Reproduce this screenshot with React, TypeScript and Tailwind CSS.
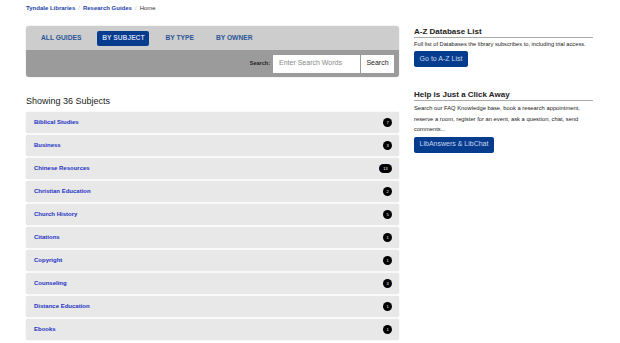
import React from "react";

const subjects: [string, string][] = [
  ["Biblical Studies", "7"],
  ["Business", "3"],
  ["Chinese Resources", "13"],
  ["Christian Education", "2"],
  ["Church History", "5"],
  ["Citations", "1"],
  ["Copyright", "1"],
  ["Counseling", "3"],
  ["Distance Education", "1"],
  ["Ebooks", "1"],
];

export default function App() {
  return (
    <div className="w-[620px] h-[343px] overflow-hidden bg-white text-[#222] font-['Liberation_Sans',Arial,sans-serif]">
      <div className="flex items-center gap-[3px] pl-[26px] pt-[2px] h-[14px] text-[6px] font-bold">
        <span className="text-[#1c3fa8]">Tyndale Libraries</span>
        <span className="text-[#bbb] font-normal">/</span>
        <span className="text-[#1c3fa8]">Research Guides</span>
        <span className="text-[#bbb] font-normal">/</span>
        <span className="text-[#333] font-normal">Home</span>
      </div>
      <div className="flex pl-[26px] pt-[12px] gap-[15px]">
        <div className="w-[373px] flex flex-col">
          <div className="rounded-[3px] overflow-hidden shadow-[0_0_1px_rgba(0,0,0,0.4)]">
            <div className="bg-[#cdcdcd] h-[24px] flex items-center pl-[8px] text-[6.7px] font-bold text-[#2b5597] whitespace-nowrap">
              <div className="px-[7px] h-[15px] flex items-center">ALL GUIDES</div>
              <div className="w-[52px] h-[15px] justify-center flex items-center bg-[#063c8e] text-[#c9d5ee] rounded-[2px] ml-[9px]">BY SUBJECT</div>
              <div className="px-[7px] h-[15px] flex items-center ml-[9px]">BY TYPE</div>
              <div className="px-[7px] h-[15px] flex items-center ml-[8px]">BY OWNER</div>
            </div>
            <div className="bg-[#9b9b9b] h-[27px] flex items-center justify-end pr-[5px]">
              <span className="text-[5.5px] font-bold text-[#222] mr-[3px]">Search:</span>
              <div className="w-[87px] h-[18px] bg-white flex items-center pl-[6px] text-[7px] text-[#888]">Enter Search Words</div>
              <div className="w-[33px] h-[18px] bg-white ml-[1px] flex items-center justify-center text-[7px] text-[#222]">Search</div>
            </div>
          </div>
          <div className="mt-[19px] text-[9px] text-[#222] leading-[11px]">Showing 36 Subjects</div>
          <div className="mt-[5px] flex flex-col gap-[2px]">
            {subjects.map(([name, n]) => (
              <div
                key={name}
                className="h-[21px] bg-[#e8e8e8] rounded-[3px] shadow-[0_0_1px_rgba(0,0,0,0.25)] flex items-center justify-between pl-[8px] pr-[7px]"
              >
                <span className="text-[6px] font-bold text-[#1b32c4]">{name}</span>
                <span
                  className={`h-[9px] ${n.length > 1 ? "w-[13px]" : "w-[9px]"} rounded-full bg-black text-white text-[4px] flex items-center justify-center`}
                >
                  {n}
                </span>
              </div>
            ))}
          </div>
        </div>
        <div className="w-[179px] flex flex-col">
          <div className="text-[8px] font-bold text-[#222] leading-[9px] pt-[1px] pb-[1px] border-b border-[#aaa]">A-Z Database List</div>
          <div className="text-[5.7px] text-[#222] mt-[2px] leading-[8px] whitespace-nowrap">Full list of Databases the library subscribes to, including trial access.</div>
          <div className="mt-[3px] w-[54px] h-[16px] bg-[#063c8e] rounded-[2px] flex items-center justify-center text-[7px] text-[#c9d5ee]">Go to A-Z List</div>
          <div className="mt-[23px] text-[8px] font-bold text-[#222] leading-[9px] pb-[1px] border-b border-[#aaa]">Help is Just a Click Away</div>
          <div className="text-[5.8px] text-[#222] mt-[2px] leading-[10.5px]">
            Search our FAQ Knowledge base, book a research appointment,
            <br />
            reserve a room, register for an event, ask a question, chat, send
            <br />
            comments...
          </div>
          <div className="mt-[2px] w-[80px] h-[16px] bg-[#063c8e] rounded-[2px] flex items-center justify-center text-[7px] text-[#c9d5ee]">LibAnswers &amp; LibChat</div>
        </div>
      </div>
    </div>
  );
}
